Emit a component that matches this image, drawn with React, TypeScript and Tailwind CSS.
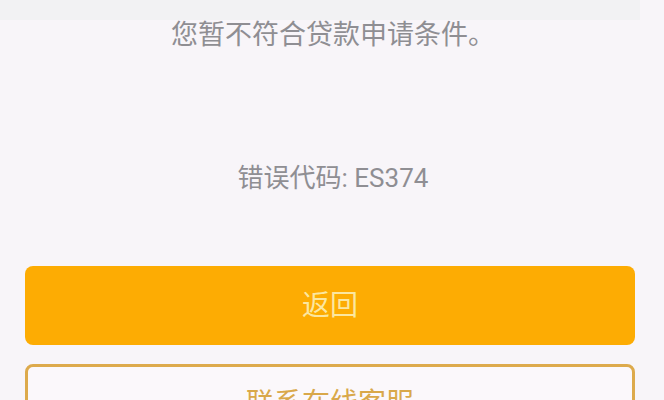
export default function App() {
  return (
    <div className="h-[400px] w-[664px] overflow-hidden bg-[#f8f5f9] font-['Roboto','Noto_Sans_CJK_SC',sans-serif]">
      <div className="h-[20px] w-[640px] bg-[#f2f2f3]" />
      <p className="mt-[1px] pl-[2px] text-center text-[27px] leading-[28px] text-[#8f8e93]">您暂不符合贷款申请条件。</p>
      <p className="mt-[115px] pl-[2px] text-center text-[26px] leading-[28px] text-[#8f8e93]">错误代码: ES374</p>
      <div className="mt-[74px] flex flex-col gap-[19px] px-[25px] pr-[29px]">
        <button className="flex h-[79px] items-center justify-center rounded-[8px] bg-[#fdac03] text-[28px] text-[#fbe7a0]">
          返回
        </button>
        <button className="flex h-[79px] items-center justify-center rounded-[8px] border-[3px] border-[#ddaa4c] bg-[#fbf8fb] text-[28px] text-[#d9a84a]">
          联系在线客服
        </button>
      </div>
    </div>
  )
}
